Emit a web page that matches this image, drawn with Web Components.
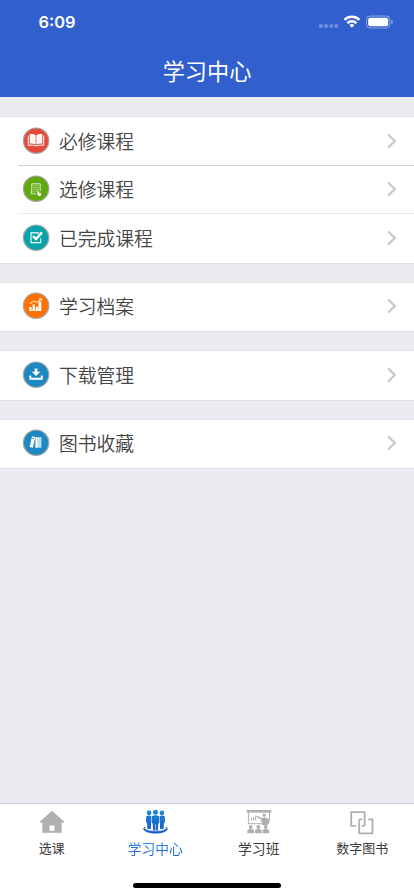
<!DOCTYPE html>
<html lang="zh-CN">
<head>
<meta charset="utf-8">
<title>学习中心</title>
<style>
html,body{margin:0;height:100%}
body{font-family:"Noto Sans CJK SC",sans-serif;background:#ebeaf0;overflow:hidden}
</style>
</head>
<body>
<study-app></study-app>
<script>
const define = (name, html) => customElements.define(name, class extends HTMLElement {
  constructor() {
    super();
    const t = document.createElement('template');
    t.innerHTML = html;
    this.attachShadow({mode: 'open'}).append(t.content.cloneNode(true));
  }
});

define('status-bar', `
<style>
:host{display:flex;height:44px;box-sizing:border-box;padding:1px 15px 0 38.5px;align-items:center;color:#fff}
time{font:600 16.4px/20px Inter,sans-serif;flex:1}
svg{display:block}
</style>
<time>6:09</time>
<svg width="82" height="20" viewBox="317 12.5 82 20" fill="#fff">
<g opacity=".32"><rect x="319" y="24.8" width="3.7" height="3.4" rx="1"/><rect x="324.2" y="24.8" width="3.7" height="3.4" rx="1"/><rect x="329.3" y="24.8" width="3.7" height="3.4" rx="1"/><rect x="334.4" y="24.8" width="3.7" height="3.4" rx="1"/></g>
<g fill="none" stroke="#fff" stroke-width="2.4"><path d="M344.4 20.4a10.6 10.6 0 0 1 15 0"/><path d="M347.3 23.6a6.5 6.5 0 0 1 9.2 0"/></g>
<path d="M349.4 25.6a3.8 3.8 0 0 1 5 0l-2.5 2.7z"/>
<rect x="366.5" y="16.5" width="23.4" height="12" rx="3.5" fill="none" stroke="#fff" opacity=".45"/>
<rect x="368.2" y="18.2" width="20" height="8.6" rx="2"/>
<path d="M391.4 20.3c1.8.7 1.8 3.7 0 4.4z" opacity=".5"/>
</svg>`);

define('nav-header', `
<style>
:host{display:flex;flex-direction:column;height:97px;background:#315fcd;color:#fff;flex:none}
h1{margin:0;flex:1;font-size:22.2px;font-weight:400;line-height:54px;text-align:center}
</style>
<status-bar></status-bar><h1><slot></slot></h1>`);

define('list-group', `
<style>
:host{display:block;background:#fff;box-shadow:0 -.5px 0 #d9d9de,0 .5px 0 #d2d2d7}
</style><slot></slot>`);

define('list-row', `
<style>
:host{display:flex;align-items:center;height:48.5px;box-sizing:border-box;padding:0 16px 1.4px 22px;
 color:#444;background:linear-gradient(var(--rule,#d3d3d7),var(--rule,#d3d3d7)) 18px 100%/100% 1px no-repeat}
:host([soft]){--rule:#e9e9ec}
:host(:last-child){--rule:transparent}
.label{flex:1;margin-left:9px;font-size:18.8px;line-height:28px;font-weight:350}
svg{display:block}
</style>
<slot name="icon"></slot><span class="label"><slot></slot></span>
<svg width="12" height="18" viewBox="0 0 12 18"><path d="M2.2 2.6 8.8 9l-6.6 6.4" fill="none" stroke="#c6c6ca" stroke-width="2.1"/></svg>`);

const glyphs = {
  book: ['#e5493c', '<g transform="translate(0 -.9)"><path d="M6.3 9.4v9.8q4-.7 7.7.6 3.7-1.3 7.7-.6V9.4" fill="none" stroke="#fff" stroke-width="1"/><path d="M7.8 8q3.5-.6 5.8 1.1v9.2q-2.7-1.3-5.8-.8zM20.2 8q-3.5-.6-5.8 1.1v9.2q2.7-1.3 5.8-.8z" fill="#fff"/><path d="M9.2 10.8l3 .5m-3 1.5 3 .5m-3 1.5 3 .5m6.6-4.5-3 .5m3 1.5-3 .5m3 1.5-3 .5" stroke="#e5493c" stroke-opacity=".25" stroke-width=".7"/></g>'],
  select: ['#60a90c', '<path d="M13.6 18.8H9.3V17h.5V8.8h8.4V16" fill="none" stroke="#fff" stroke-opacity=".8" stroke-width="1"/><path d="M11.2 10.8h5.6m-5.6 2h5.6m-5.6 2h5.6m-5.6 2h3" stroke="#fff" stroke-opacity=".6" stroke-width=".8"/><path d="M15.2 15.8q.8-.7 1.2.3l.4 1.3 1.7.5q.8.3.6 1.2l-.6 2h-2l-1.8-2.4q.1-.8 1.1-.3z" fill="#fff"/>'],
  check: ['#05a4ab', '<path d="M17 8.9H9v9.7h9.7v-4.3" fill="none" stroke="#fff" stroke-width="1.1"/><path d="m11 12.2 3 2.8 5.9-6.6" fill="none" stroke="#fff" stroke-width="2.4"/>'],
  chart: ['#ff7200', '<g transform="translate(0 -.4)"><path d="M7.3 15.5h2.2v3.6H7.3zm3.3-2.7h2.3v6.3h-2.3zm3.2 2.3H16v4h-2.2zm2.7-5.3h2.8v9.3h-2.8z" fill="#fff"/><path d="m7.9 12 4-2.6 3.1 1.4 4.1-3.5m-2.1 0h2.5v1.9M7.3 18.7h12" fill="none" stroke="#fff" stroke-width="1"/></g>'],
  download: ['#1b88c2', '<g transform="translate(0 -.7)"><path d="M12.6 8.2h2.8v3.3h2.9L14 15.7l-4.2-4.2h2.8z" fill="#fff"/><path d="M8.3 15.1v3.4h11.5v-3.4" fill="none" stroke="#fff" stroke-width="1.9"/></g>'],
  shelf: ['#1b88c2', '<g transform="translate(0 -.3)"><path d="m10.1 7.6 3.2.8-2.4 10.7-3.3-.7z" fill="#fff"/><path d="m10.6 9.8 1.5.3" stroke="#1b88c2"/><path d="M13.4 8.5h2.4v10.6h-2.4z" fill="#fff"/><path d="M15.8 8.5h3.6v10.6h-3.6z" fill="#fff" opacity=".72"/></g>']
};
customElements.define('round-icon', class extends HTMLElement {
  connectedCallback() {
    const [color, art] = glyphs[this.getAttribute('name')];
    this.attachShadow({mode: 'open'}).innerHTML = `<style>:host{display:block;width:28px;height:28px}svg{display:block}</style>
    <svg width="28" height="28" viewBox="0 0 28 28"><circle cx="14.1" cy="13.7" r="12.7" fill="${color}" stroke="#a5a5a5" stroke-width="1.2"/>${art}</svg>`;
  }
});

define('tab-item', `
<style>
:host{display:flex;flex:1;flex-direction:column;align-items:center;color:#3a3a3a}
::slotted(svg){display:block;height:28px;width:36px;margin-top:4px}
span{font-size:13px;line-height:20px;margin-top:1.5px;white-space:nowrap}
:host([wide]) span{font-size:13.8px}
:host([active]) span{background:linear-gradient(#278ce3 20%,#225ed8 85%);background-clip:text;-webkit-background-clip:text;color:transparent}
</style>
<slot name="icon"></slot><span><slot></slot></span>`);

define('tab-bar', `
<style>
:host{display:flex;flex-direction:column;height:93px;box-sizing:border-box;background:#fff;border-top:1px solid #d0d0d5;margin-top:auto;flex:none}
nav{display:flex;flex:1}
.home{width:148px;height:5px;border-radius:3px;background:#000;margin:0 auto 8.5px}
</style>
<nav><slot></slot></nav><div class="home"></div>`);

define('study-app', `
<style>
:host{display:flex;flex-direction:column;width:100%;height:896px;background:#ebeaf0}
main{display:flex;flex-direction:column;gap:20px;padding-top:20.4px}
</style>
<nav-header>学习中心</nav-header>
<main>
<list-group>
<list-row><round-icon slot="icon" name="book"></round-icon>必修课程</list-row>
<list-row soft><round-icon slot="icon" name="select"></round-icon>选修课程</list-row>
<list-row><round-icon slot="icon" name="check"></round-icon>已完成课程</list-row>
</list-group>
<list-group><list-row><round-icon slot="icon" name="chart"></round-icon>学习档案</list-row></list-group>
<list-group><list-row><round-icon slot="icon" name="download"></round-icon>下载管理</list-row></list-group>
<list-group><list-row><round-icon slot="icon" name="shelf"></round-icon>图书收藏</list-row></list-group>
</main>
<tab-bar>
<tab-item><svg slot="icon" viewBox="0 0 36 28"><path d="M18 2.8 6 13.5v1h2.4v8.3H8v2h20v-2h-.4v-8.3H30v-1zM15.5 17.5h5v5.3h-5z" fill="#afafaf" fill-rule="evenodd"/></svg>选课</tab-item>
<tab-item active wide><svg slot="icon" viewBox="0 0 36 28">
<defs><linearGradient id="b" gradientUnits="userSpaceOnUse" x1="0" y1="2" x2="0" y2="25"><stop stop-color="#1b8ad8"/><stop offset="1" stop-color="#1556c8"/></linearGradient></defs>
<g fill="url(#b)"><circle cx="12.1" cy="4.9" r="2.3"/><circle cx="24.9" cy="4.9" r="2.3"/><path d="M9.2 8.3q2.6-1.6 4.9-.4v6.8l-.2 6.3h-3.4l-.5-6-1-.8zM27.8 8.3q-2.6-1.6-4.9-.4v6.8l.2 6.3h3.4l.5-6 1-.8z"/><circle cx="18.5" cy="4.2" r="2.5"/><path d="M14.7 8.2q3.8-2 7.6 0v6.6l-1 .8-.4 6.8h-2.1v-6.2h-.6v6.2h-2.1l-.4-6.8-1-.8z"/><path d="M8.2 19q-1.6 1.3-.2 2.2 3.8 2.2 10.5 2.2T29 21.2q1.4-.9-.2-2.2 2.7 1.3 1 3.3-3.4 2.9-11.3 2.9T7.2 22.3q-1.7-2 1-3.3z" stroke="url(#b)" stroke-width=".6"/></g></svg>学习中心</tab-item>
<tab-item wide><svg slot="icon" viewBox="0 0 36 28"><g fill="#afafaf"><path d="M5.7 2h24.6v2.6H5.7z"/><path d="M7.4 4.2v11.5h14M28.5 4.2v8" fill="none" stroke="#afafaf"/><path d="M9.7 9.8h1.2v2.6H9.7zm2.3-.8h1.2v3.4H12zm2.2-1.4h1v4.8h-1zM15.8 7.8l5 2.3.3 1.9-5.6-3z"/><circle cx="23.2" cy="7.1" r="1.7"/><path d="M20.5 10.2q2.7-2 5.5 0l2.3 1.4v3.3l-2.3 2h-4.8v-2.4l-1-.6z"/><circle cx="9.7" cy="19" r="1.9"/><circle cx="17.3" cy="19" r="1.9"/><circle cx="24.8" cy="19" r="1.9"/><path d="M6.3 25.2v-3q3.3-2.5 6.7 0v3zm7.7 0v-3q3.3-2.5 6.7 0v3zm7.6 0v-3q3.2-2.5 6.5 0v3z"/></g></svg>学习班</tab-item>
<tab-item><svg slot="icon" viewBox="0 0 36 28"><g fill="none" stroke="#afafaf" stroke-width="1.8" stroke-linejoin="round"><path d="M11.9 17.8H7.2V4.1h13.5v12.3q0 1.4-1.3 1.4h-2"/><path d="M24.3 11.4h4.2v14H15.2V12.8q0-1.4 1.3-1.4h1.7"/></g></svg>数字图书</tab-item>
</tab-bar>`);
</script>
</body>
</html>
